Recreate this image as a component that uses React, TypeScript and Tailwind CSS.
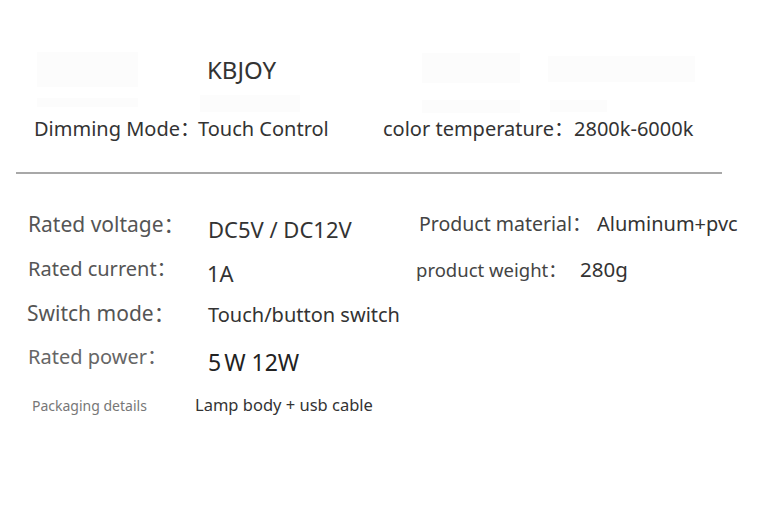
const font = { fontFamily: '"Noto Sans", "Noto Sans CJK SC", sans-serif' };

function Ghost({ className }: { className: string }) {
  return <div className={`shrink-0 bg-[#fcfcfc] ${className}`} />;
}

// every text uses leading-none, so the baseline sits ~0.89em below its top
export default function App() {
  return (
    <main
      className="w-[781px] h-[527px] bg-white overflow-hidden leading-none whitespace-nowrap"
      style={font}
    >
      <section className="pt-[52px]">
        <div className="flex items-start h-[43px]">
          <Ghost className="ml-[37px] w-[101px] h-[35px]" />
          <div className="ml-[69px] mt-[6px] w-[215px] text-[24px] text-[#333]">KBJOY</div>
          <Ghost className="mt-[1px] w-[98px] h-[30px]" />
          <Ghost className="ml-[28px] mt-[4px] w-[147px] h-[26px]" />
        </div>
        <div className="flex items-start h-[24px]">
          <Ghost className="ml-[37px] mt-[3px] w-[101px] h-[9px]" />
          <Ghost className="ml-[62px] w-[100px] h-[17px]" />
          <Ghost className="ml-[122px] mt-[5px] w-[98px] h-[13px]" />
          <Ghost className="ml-[30px] mt-[5px] w-[57px] h-[12px]" />
        </div>
        <div className="flex items-start h-[53px] text-[20px] text-[#333]">
          <span className="ml-[34px] w-[164px] shrink-0">Dimming Mode：</span>
          <span className="w-[185px] shrink-0">Touch Control</span>
          <span className="w-[191px] shrink-0">color temperature：</span>
          <span>2800k-6000k</span>
        </div>
        <div className="ml-[16px] w-[706px] h-[2px] bg-[#a8a8a8]" />
      </section>

      <section className="mt-[40px] flex flex-col">
        <div className="flex items-start h-[45px]">
          <div className="ml-[28px] w-[180px] shrink-0 text-[21px] text-[#555]">Rated voltage：</div>
          <div className="mt-[4px] w-[211px] shrink-0 text-[22px] text-[#333]">DC5V / DC12V</div>
          <div className="w-[178px] shrink-0 text-[19.5px] text-[#444]">Product material：</div>
          <div className="text-[20px] text-[#333]">Aluminum+pvc</div>
        </div>
        <div className="flex items-start h-[44px]">
          <div className="ml-[28px] w-[179px] shrink-0 text-[20px] text-[#555]">Rated current：</div>
          <div className="mt-[3px] w-[209px] shrink-0 text-[22px] text-[#333]">1A</div>
          <div className="mt-[2px] w-[164px] shrink-0 text-[18.5px] text-[#444]">product weight：</div>
          <div className="text-[20.5px] text-[#333]">280g</div>
        </div>
        <div className="flex items-start h-[44px]">
          <div className="ml-[27px] w-[181px] shrink-0 text-[21px] text-[#555]">Switch mode：</div>
          <div className="mt-[2px] text-[20px] text-[#333]">Touch/button switch</div>
        </div>
        <div className="flex items-start h-[50px]">
          <div className="ml-[28px] w-[180px] shrink-0 text-[20px] text-[#666]">Rated power：</div>
          <div className="mt-[4px] text-[23px] text-[#222]">
            <span className="mr-[3px]">5</span>W 12W
          </div>
        </div>
        <div className="flex items-start h-[30px]">
          <div className="ml-[32px] mt-[2px] w-[163px] shrink-0 text-[14px] text-[#777]">Packaging details</div>
          <div className="text-[16.5px] text-[#333]">Lamp body + usb cable</div>
        </div>
      </section>
    </main>
  );
}
